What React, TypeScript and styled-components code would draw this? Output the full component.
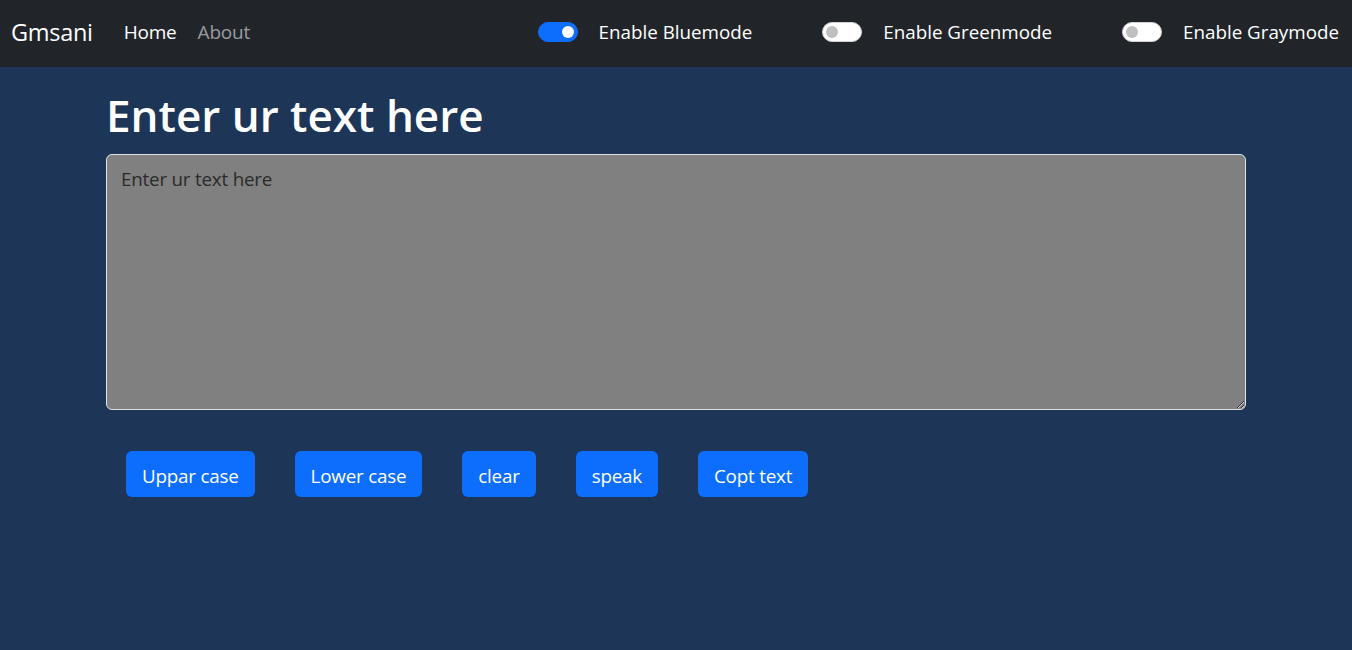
import { useState } from 'react';
import styled, { createGlobalStyle } from 'styled-components';

const GlobalStyle = createGlobalStyle`
  * { box-sizing: border-box; }
  html, body {
    margin: 0;
    padding: 0;
    background-color: #1d3557;
    font-family: "Open Sans", "Noto Sans", "Liberation Sans", sans-serif;
    color: #ffffff;
  }
`;

const Navbar = styled.nav`
  height: 67px;
  background-color: #212529;
  display: flex;
  align-items: center;
  padding: 0 13px 3px 11px;
`;

const Brand = styled.a`
  font-size: 23.5px;
  color: #ffffff;
  text-decoration: none;
  margin-right: 31px;
  letter-spacing: -0.3px;
`;

const NavList = styled.ul`
  display: flex;
  gap: 21px;
  list-style: none;
  margin: 0;
  padding: 0;
`;

const NavLink = styled.a<{ $active?: boolean }>`
  font-size: 19px;
  color: ${(p) => (p.$active ? '#ffffff' : 'rgba(255, 255, 255, 0.55)')};
  text-decoration: none;
  letter-spacing: -0.2px;
`;

const Toggles = styled.div`
  margin-left: auto;
  display: flex;
  align-items: center;
  gap: 70px;
`;

const ToggleWrap = styled.label`
  display: flex;
  align-items: center;
  gap: 21px;
  font-size: 18.8px;
  color: #ffffff;
  cursor: pointer;
`;

const Switch = styled.span<{ $on: boolean }>`
  position: relative;
  width: 40px;
  height: 20px;
  border-radius: 10px;
  background-color: ${(p) => (p.$on ? '#0d6efd' : '#ffffff')};
  border: 1px solid ${(p) => (p.$on ? '#0d6efd' : '#d0d0d0')};
  flex-shrink: 0;

  &::after {
    content: '';
    position: absolute;
    top: 3px;
    left: ${(p) => (p.$on ? '23px' : '3px')};
    width: 12px;
    height: 12px;
    border-radius: 50%;
    background-color: ${(p) => (p.$on ? '#ffffff' : '#bfbfbf')};
  }
`;

const Container = styled.main`
  width: 1140px;
  margin: 0 auto;
  padding-top: 20px;
`;

const Heading = styled.h1`
  font-size: 44px;
  font-weight: 600;
  line-height: 57px;
  margin: 0 0 10px 0;
`;

const TextArea = styled.textarea`
  display: block;
  width: 100%;
  height: 256px;
  background-color: #808080;
  border: 1px solid #dee2e6;
  border-radius: 6px;
  padding: 10px 14px;
  font-family: inherit;
  font-size: 18.8px;
  line-height: 1.5;
  color: #212529;
  letter-spacing: -0.2px;
  outline: none;

  &::placeholder {
    color: #2b2b2b;
  }
`;

const ButtonRow = styled.div`
  display: flex;
  gap: 40px;
  padding: 41px 20px 0;
`;

const Button = styled.button`
  height: 46px;
  padding: 3px 16px 0;
  background-color: #0d6efd;
  color: #ffffff;
  border: none;
  border-radius: 6px;
  font-family: inherit;
  font-size: 18.8px;
  letter-spacing: -0.2px;
  cursor: pointer;
`;

const modes = ['Bluemode', 'Greenmode', 'Graymode'];
const actions = ['Uppar case', 'Lower case', 'clear', 'speak', 'Copt text'];

export default function App() {
  const [mode, setMode] = useState('Bluemode');
  const [text, setText] = useState('');

  return (
    <>
      <GlobalStyle />
      <Navbar>
        <Brand href="#">Gmsani</Brand>
        <NavList>
          <li><NavLink href="#" $active>Home</NavLink></li>
          <li><NavLink href="#">About</NavLink></li>
        </NavList>
        <Toggles>
          {modes.map((m) => (
            <ToggleWrap key={m} onClick={() => setMode(m)}>
              <Switch $on={mode === m} />
              Enable {m}
            </ToggleWrap>
          ))}
        </Toggles>
      </Navbar>
      <Container>
        <Heading>Enter ur text here</Heading>
        <TextArea
          placeholder="Enter ur text here"
          value={text}
          onChange={(e) => setText(e.target.value)}
        />
        <ButtonRow>
          {actions.map((a) => (
            <Button key={a}>{a}</Button>
          ))}
        </ButtonRow>
      </Container>
    </>
  );
}
